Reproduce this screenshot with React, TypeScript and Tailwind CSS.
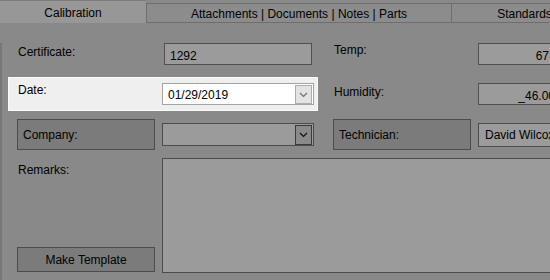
import React from "react";

function Chevron({ color }: { color: string }) {
  return (
    <svg width="9" height="6" viewBox="0 0 9 6" className="block">
      <polyline points="1,1 4.5,4.5 8,1" fill="none" stroke={color} strokeWidth="1.2" />
    </svg>
  );
}

export default function App() {
  return (
    <div className="w-[550px] h-[280px] overflow-hidden bg-[#898989] font-['Liberation_Sans',Arial,sans-serif] text-[12px] leading-[14px] text-black">
      {/* Tabs */}
      <div className="flex h-[23px] whitespace-nowrap">
        <div className="w-[146px] shrink-0 h-[23px] bg-[#979797] border-t border-[#7c7c7c] pt-[5px] text-center">
          Calibration
        </div>
        <div className="w-[305px] shrink-0 mt-[3px] h-[20px] bg-[#8c8c8c] border-l border-t border-b border-[#6e6e6e] pt-[3px] text-center">
          Attachments | Documents | Notes | Parts
        </div>
        <div className="w-[146px] shrink-0 mt-[3px] h-[20px] bg-[#8c8c8c] border-l border-t border-b border-[#6e6e6e] pt-[3px] text-center">
          Standards
        </div>
      </div>

      {/* Content */}
      <div className="h-[257px] border-l-2 border-[#777777] whitespace-nowrap">
        {/* Row 1 */}
        <div className="flex mt-[20px] h-[22px]">
          <div className="ml-[16px] w-[146px] shrink-0 pt-[2px]">Certificate:</div>
          <div className="w-[148px] h-[22px] shrink-0 border border-[#505050] bg-[#9b9b9b] pl-[5px] pt-[5px]">1292</div>
          <div className="ml-[22px] w-[144px] shrink-0">Temp:</div>
          <div className="w-[80px] h-[22px] shrink-0 border border-[#505050] bg-[#9b9b9b] pr-[8px] pt-[5px] text-right">67</div>
        </div>

        {/* Row 2 */}
        <div className="flex mt-[12px] h-[34px]">
          <div className="ml-[6px] w-[310px] h-[34px] shrink-0 flex bg-[#efefef] border border-[#fbfbfb]">
            <div className="ml-[9px] w-[144px] shrink-0 mt-[5px]">Date:</div>
            <div className="mt-[5px] w-[152px] h-[22px] shrink-0 flex bg-white border border-[#a3a3a3]">
              <div className="flex-1 pl-[5px] pt-[4px]">01/29/2019</div>
              <div className="mt-[1px] mr-[1px] w-[17px] h-[19px] border border-[#adadad] bg-[#e3e3e3] flex items-center justify-center">
                <Chevron color="#707070" />
              </div>
            </div>
          </div>
          <div className="ml-[16px] w-[144px] shrink-0 mt-[8px]">Humidity:</div>
          <div className="mt-[6px] w-[84px] h-[22px] shrink-0 border border-[#505050] bg-[#9b9b9b] pr-[6px] pt-[5px] text-right">_46.00</div>
        </div>

        {/* Row 3 */}
        <div className="flex mt-[8px] h-[31px]">
          <div className="ml-[15px] w-[138px] h-[31px] shrink-0 border border-[#4c4c4c] bg-[#7b7b7b] pl-[5px] pt-[8px]">Company:</div>
          <div className="ml-[7px] mt-[4px] w-[152px] h-[23px] shrink-0 flex justify-end border border-[#4c4c4c] bg-[#9b9b9b]">
            <div className="mt-[1px] mr-[1px] w-[17px] h-[20px] border border-[#3a3a3a] bg-[#8a8a8a] flex items-center justify-center">
              <Chevron color="#111111" />
            </div>
          </div>
          <div className="ml-[19px] w-[138px] h-[31px] shrink-0 border border-[#4c4c4c] bg-[#7b7b7b] pl-[5px] pt-[8px]">Technician:</div>
          <div className="ml-[7px] mt-[4px] w-[100px] h-[24px] shrink-0 border border-[#4c4c4c] bg-[#9b9b9b] pl-[6px] pt-[4px]">David Wilcox</div>
        </div>

        {/* Row 4 */}
        <div className="flex mt-[8px] h-[115px]">
          <div className="ml-[15px] w-[138px] shrink-0 flex flex-col">
            <div className="pl-[1px] mt-[5px]">Remarks:</div>
            <div className="mt-auto mb-[1px] h-[25px] border border-[#4c4c4c] bg-[#7b7b7b] pt-[5px] text-center">Make Template</div>
          </div>
          <div className="ml-[7px] w-[400px] h-[115px] shrink-0 border border-[#4c4c4c] bg-[#9b9b9b]"></div>
        </div>
      </div>
    </div>
  );
}
